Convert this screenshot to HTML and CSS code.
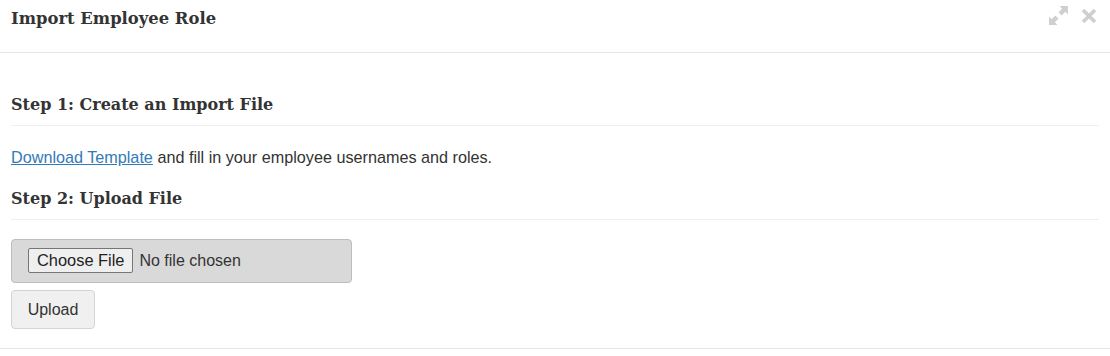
FILE: index.html
```html
<!DOCTYPE html>
<html lang="en">
<head>
    <meta charset="UTF-8">
    <meta name="viewport" content="width=device-width, initial-scale=1.0">
    <title>Import Employee Role</title>
    <link rel="stylesheet" href="styles.css">
</head>
<body>
    <div class="modal">
        <div class="modal-header">
            <h3 class="modal-title">Import Employee Role</h3>
            <div class="modal-tools">
                <svg class="tool-icon" width="21" height="21" viewBox="0 0 20 20">
                    <g fill="#cfcfcf">
                        <path d="M11 1 H19 V9 L16.5 6.5 L13 10 L10 7 L13.5 3.5 Z"/>
                        <path d="M9 19 H1 V11 L3.5 13.5 L7 10 L10 13 L6.5 16.5 Z"/>
                    </g>
                </svg>
                <svg class="tool-icon" width="16" height="16" viewBox="0 0 16 16">
                    <path d="M2 2 L14 14 M14 2 L2 14" stroke="#cfcfcf" stroke-width="3.6" stroke-linecap="butt"/>
                </svg>
            </div>
        </div>
        <div class="modal-body">
            <h4 class="step-title">Step 1: Create an Import File</h4>
            <p class="step-text"><a href="#">Download Template</a> and fill in your employee usernames and roles.</p>
            <h4 class="step-title">Step 2: Upload File</h4>
            <form class="upload-form">
                <div class="file-box">
                    <input type="file" id="importFile" name="importFile">
                </div>
                <button type="submit" class="btn">Upload</button>
            </form>
        </div>
    </div>
</body>
</html>
```

FILE: styles.css
```css
body {
    margin: 0;
    font-family: "Liberation Sans", Arial, sans-serif;
    font-size: 16px;
    color: #333;
    background: #fff;
}
.modal {
    width: 1110px;
}
.modal-header {
    display: flex;
    justify-content: space-between;
    height: 52px;
    padding: 0 13px 0 11px;
    border-bottom: 1px solid #e5e5e5;
}
.modal-title {
    margin: 0;
    padding-top: 9px;
    font-family: "DejaVu Serif", "Liberation Serif", serif;
    font-size: 16.4px;
    line-height: 20px;
    font-weight: bold;
    color: #333;
}
.modal-tools {
    display: flex;
    align-items: flex-start;
    gap: 12px;
    padding-top: 5px;
}
.tool-icon {
    display: block;
}
.tool-icon + .tool-icon {
    margin-top: 3px;
}
.modal-body {
    padding: 41px 11px 19px;
    border-bottom: 1px solid #e5e5e5;
}
.step-title {
    margin: 0;
    padding-bottom: 9px;
    border-bottom: 1px solid #eee;
    font-family: "DejaVu Serif", "Liberation Serif", serif;
    font-size: 16px;
    line-height: 22px;
    font-weight: bold;
    color: #333;
}
.step-text {
    margin: 21px 0;
    font-size: 16.2px;
    line-height: 20px;
}
.step-text a {
    color: #337ab7;
    text-decoration: underline;
}
.upload-form {
    margin-top: 19px;
}
.file-box {
    box-sizing: border-box;
    width: 341px;
    height: 44px;
    padding: 8px 16px;
    background: #d9d9d9;
    border: 1px solid #bdbdbd;
    border-radius: 4px;
}
.file-box input {
    font-family: "Liberation Sans", Arial, sans-serif;
    font-size: 16px;
    color: #333;
}
.file-box input::file-selector-button {
    height: 25px;
    padding: 0 8px;
    margin-right: 6px;
    font-family: "Liberation Sans", Arial, sans-serif;
    font-size: 16.4px;
    color: #222;
    background: #efefef;
    border: 1px solid #767676;
    border-radius: 2px;
}
.btn {
    display: block;
    box-sizing: border-box;
    width: 84px;
    height: 39px;
    margin-top: 7px;
    font-family: "Liberation Sans", Arial, sans-serif;
    font-size: 16px;
    color: #333;
    background: #f0f0f0;
    border: 1px solid #d4d4d4;
    border-radius: 4px;
}
```
